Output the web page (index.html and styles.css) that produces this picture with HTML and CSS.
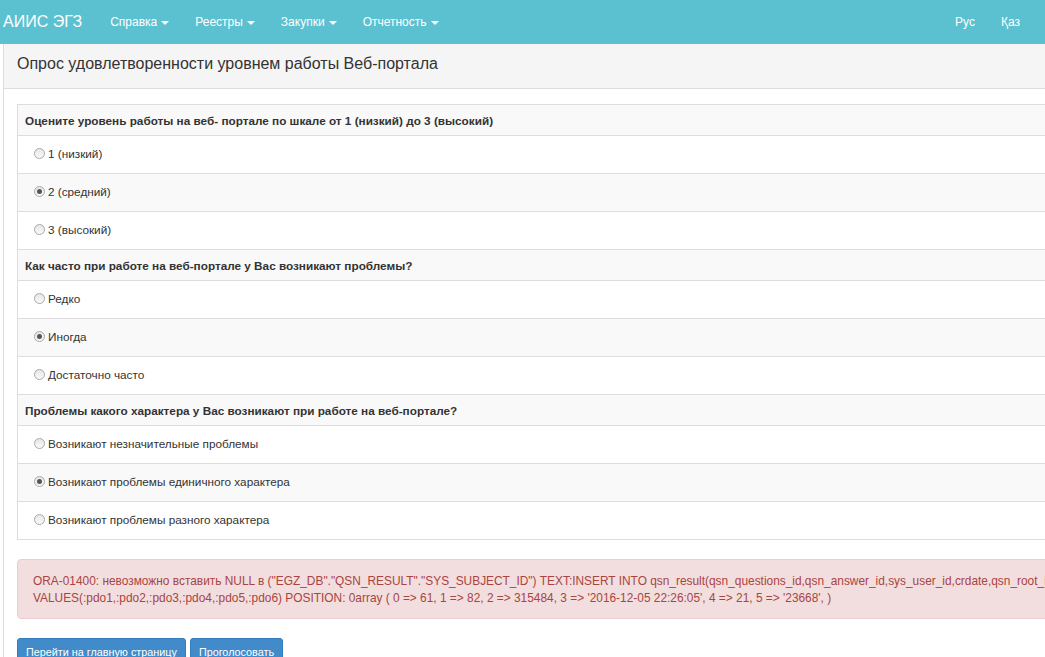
FILE: index.html
```html
<!DOCTYPE html>
<html lang="ru">
<head>
<meta charset="utf-8">
<title>Опрос</title>
<link rel="stylesheet" href="styles.css">
</head>
<body>
<nav class="navbar">
  <a class="brand" href="#">АИИС ЭГЗ</a>
  <ul class="menu">
    <li><a href="#">Справка<span class="caret"></span></a></li>
    <li><a href="#">Реестры<span class="caret"></span></a></li>
    <li><a href="#">Закупки<span class="caret"></span></a></li>
    <li><a href="#">Отчетность<span class="caret"></span></a></li>
  </ul>
  <ul class="menu menu-right">
    <li><a href="#">Рус</a></li>
    <li><a href="#">Қаз</a></li>
  </ul>
</nav>
<div class="panel">
  <div class="panel-heading">Опрос удовлетворенности уровнем работы Веб-портала</div>
  <div class="panel-body">
    <table class="survey">
      <tbody>
        <tr class="q"><td>Оцените уровень работы на веб- портале по шкале от 1 (низкий) до 3 (высокий)</td></tr>
        <tr class="a"><td><label><span class="radio"></span>1 (низкий)</label></td></tr>
        <tr class="a"><td><label><span class="radio checked"></span>2 (средний)</label></td></tr>
        <tr class="a"><td><label><span class="radio"></span>3 (высокий)</label></td></tr>
        <tr class="q"><td>Как часто при работе на веб-портале у Вас возникают проблемы?</td></tr>
        <tr class="a"><td><label><span class="radio"></span>Редко</label></td></tr>
        <tr class="a"><td><label><span class="radio checked"></span>Иногда</label></td></tr>
        <tr class="a"><td><label><span class="radio"></span>Достаточно часто</label></td></tr>
        <tr class="q"><td>Проблемы какого характера у Вас возникают при работе на веб-портале?</td></tr>
        <tr class="a"><td><label><span class="radio"></span>Возникают незначительные проблемы</label></td></tr>
        <tr class="a"><td><label><span class="radio checked"></span>Возникают проблемы единичного характера</label></td></tr>
        <tr class="a"><td><label><span class="radio"></span>Возникают проблемы разного характера</label></td></tr>
      </tbody>
    </table>
    <div class="alert">ORA-01400: невозможно вставить NULL в ("EGZ_DB"."QSN_RESULT"."SYS_SUBJECT_ID") TEXT:INSERT INTO qsn_result(qsn_questions_id,qsn_answer_id,sys_user_id,crdate,qsn_root_id,sys_subject_id)<br>VALUES(:pdo1,:pdo2,:pdo3,:pdo4,:pdo5,:pdo6) POSITION: 0array ( 0 =&gt; 61, 1 =&gt; 82, 2 =&gt; 315484, 3 =&gt; '2016-12-05 22:26:05', 4 =&gt; 21, 5 =&gt; '23668', )</div>
    <div class="actions">
      <button class="btn">Перейти на главную страницу</button>
      <button class="btn">Проголосовать</button>
    </div>
  </div>
</div>
</body>
</html>
```
FILE: styles.css
```css
html, body {
  margin: 0;
  padding: 0;
  overflow: hidden;
  background: #fff;
}
body {
  font-family: "Liberation Sans", Arial, sans-serif;
  font-size: 12px;
  color: #333;
}
a { text-decoration: none; color: inherit; }

.navbar {
  display: flex;
  align-items: center;
  height: 44px;
  background: #5bc0d0;
  color: #fff;
}
.brand {
  font-size: 16px;
  padding-left: 3px;
  margin-right: 15px;
  line-height: 44px;
}
.menu {
  display: flex;
  list-style: none;
  margin: 0;
  padding: 0;
}
.menu a {
  display: block;
  padding: 0 13px;
  line-height: 44px;
  font-size: 12px;
}
.menu-right {
  margin-left: auto;
  margin-right: 12px;
}
.caret {
  display: inline-block;
  width: 0;
  height: 0;
  margin-left: 4px;
  vertical-align: middle;
  border-top: 4px solid #fff;
  border-left: 4px solid transparent;
  border-right: 4px solid transparent;
}

.panel {
  margin-left: 3px;
  width: 1300px;
  border-left: 1px solid #ddd;
}
.panel-heading {
  height: 45px;
  box-sizing: border-box;
  padding: 0 13px 5px;
  line-height: 39px;
  background: #f5f5f5;
  border-bottom: 1px solid #ddd;
  font-size: 16px;
  color: #333;
}
.panel-body {
  padding: 15px 13px 0;
}

.survey {
  width: 100%;
  border-collapse: collapse;
  border: 1px solid #ddd;
  font-size: 11.75px;
}
.survey td {
  border-top: 1px solid #ddd;
  padding: 0 7px;
}
.survey tr:nth-child(odd) { background: #f9f9f9; }
.survey .q td {
  height: 30px;
  font-weight: bold;
}
.survey .a td {
  height: 34px;
  padding-left: 16px;
  padding-bottom: 3px;
}
.survey label {
  display: flex;
  align-items: center;
}
.radio {
  width: 9px;
  height: 9px;
  margin-right: 3px;
  border-radius: 50%;
  border: 1px solid #aaa;
  background: linear-gradient(#e6e6e6, #fafafa);
  box-sizing: content-box;
  position: relative;
}
.radio.checked::after {
  content: "";
  position: absolute;
  left: 2px;
  top: 2px;
  width: 5px;
  height: 5px;
  border-radius: 50%;
  background: #555;
}

.alert {
  margin-top: 19px;
  padding: 13px 15px 11px;
  line-height: 17px;
  background: #f2dede;
  border: 1px solid #ebccd1;
  border-radius: 4px;
  color: #a94442;
  white-space: nowrap;
  font-size: 11.9px;
}
.actions {
  margin-top: 19px;
  display: flex;
  gap: 4px;
}
.btn {
  font-family: inherit;
  font-size: 10.8px;
  color: #fff;
  background: #428bca;
  border: 1px solid #357ebd;
  border-radius: 3px;
  padding: 5px 8px;
  line-height: 17px;
}
```
